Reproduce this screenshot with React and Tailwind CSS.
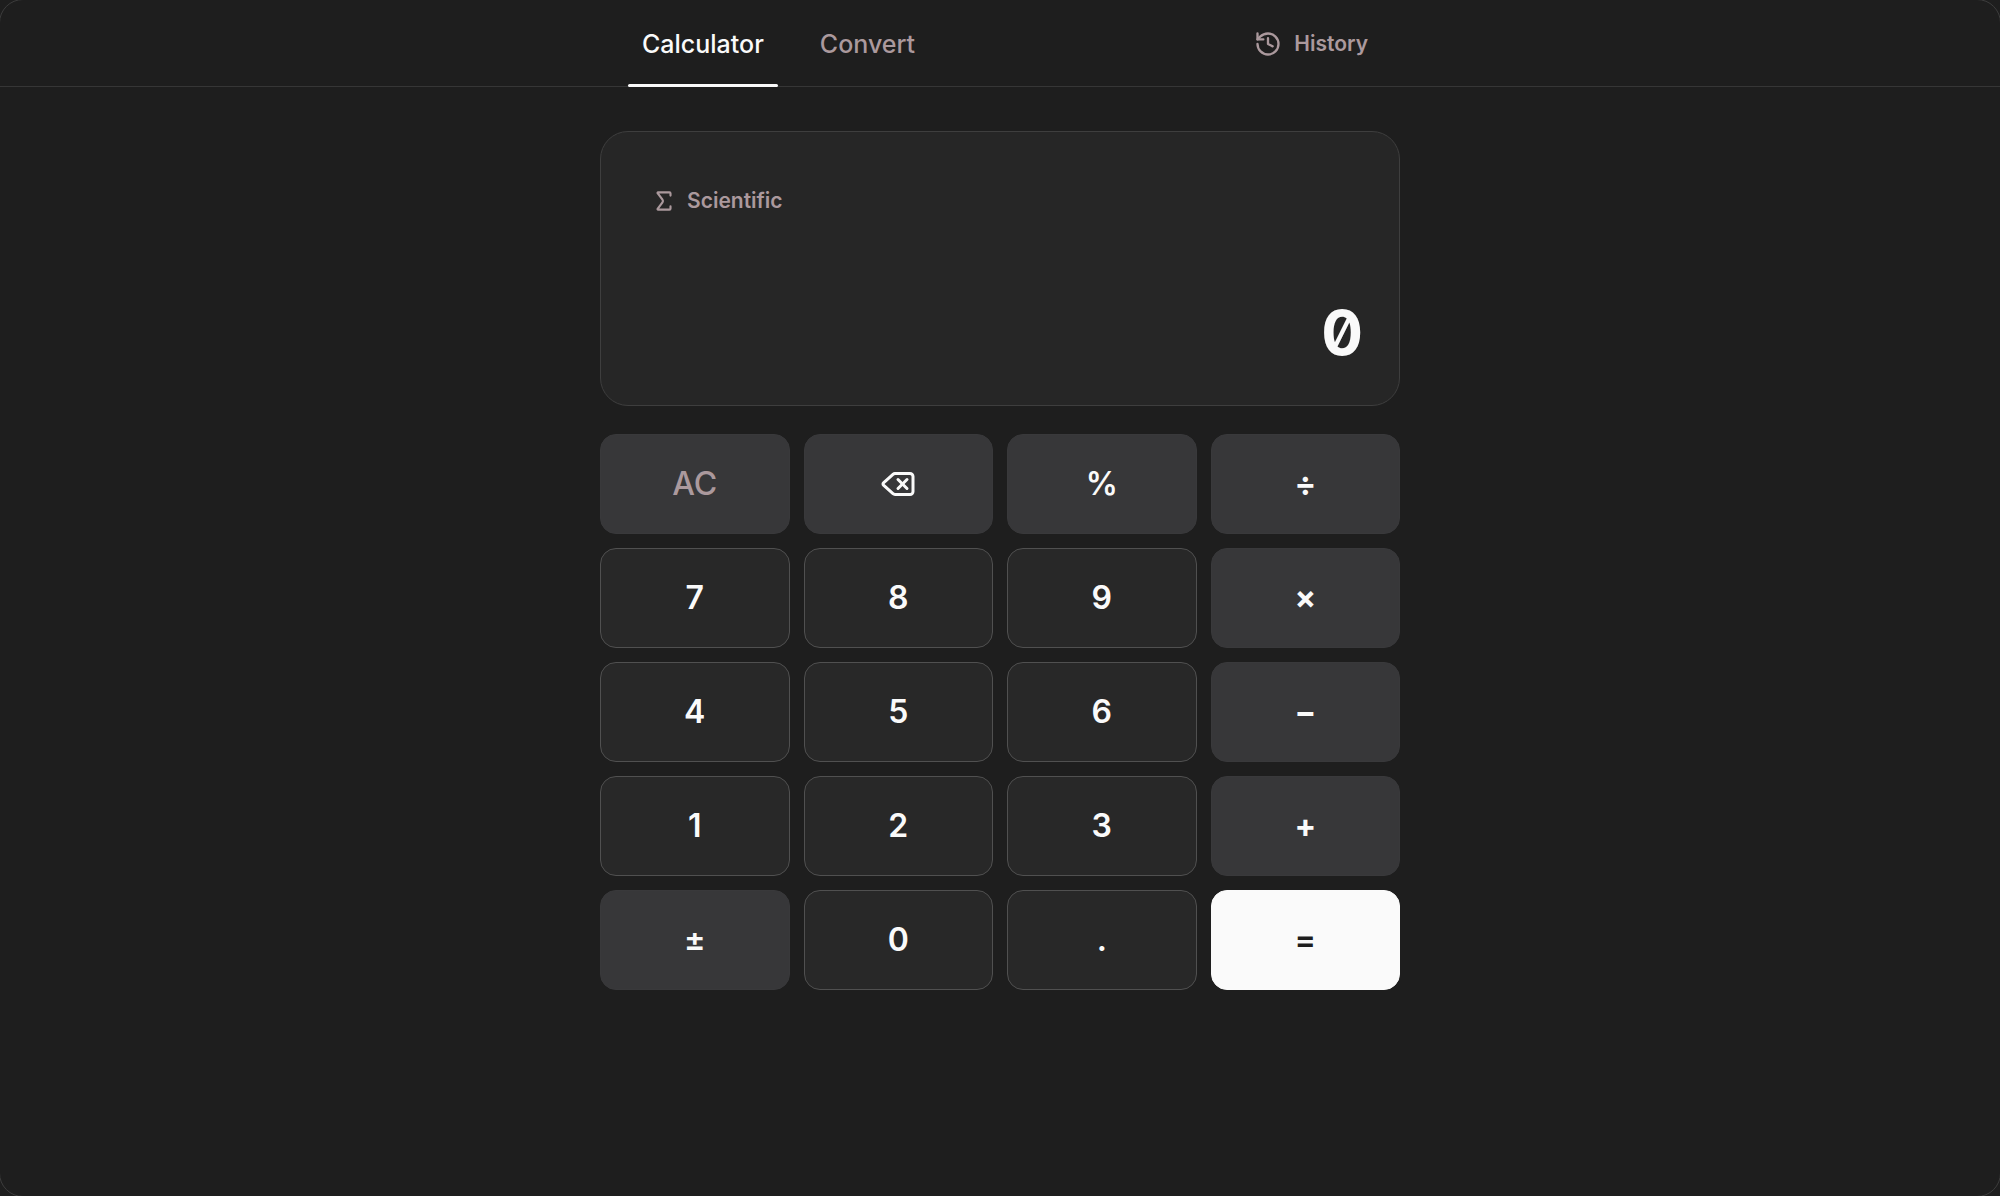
import React, { useState } from "react";
import { History, Sigma, Delete } from "lucide-react";

const KEYS = [
  { label: "AC", type: "clear" },
  { label: "Backspace", type: "function", icon: Delete },
  { label: "%", type: "function" },
  { label: "÷", type: "operator" },
  { label: "7", type: "digit" },
  { label: "8", type: "digit" },
  { label: "9", type: "digit" },
  { label: "×", type: "operator" },
  { label: "4", type: "digit" },
  { label: "5", type: "digit" },
  { label: "6", type: "digit" },
  { label: "−", type: "operator" },
  { label: "1", type: "digit" },
  { label: "2", type: "digit" },
  { label: "3", type: "digit" },
  { label: "+", type: "operator" },
  { label: "±", type: "function" },
  { label: "0", type: "digit" },
  { label: ".", type: "digit" },
  { label: "=", type: "equals" },
];

const KEY_STYLES = {
  clear: "border-[#39393b] bg-[#373739] font-medium text-[#ab999d]",
  function: "border-[#39393b] bg-[#373739] font-semibold text-[#fafafa]",
  operator: "border-[#39393b] bg-[#373739] font-bold text-[#fafafa]",
  digit: "border-[#505050] bg-[#282828] font-semibold text-[#fafafa]",
  equals: "border-[#fafafa] bg-[#fafafa] font-semibold text-[#1e1e1e]",
};

const Tab = ({ label, active, onClick }) => (
  <button
    type="button"
    onClick={onClick}
    className={`relative h-full px-3.5 text-[25px] leading-8 font-medium ${
      active ? "text-[#fafafa]" : "text-[#ab999d]"
    }`}
  >
    {label}
    {active && <span className="absolute inset-x-0 bottom-0 h-[3px] rounded-full bg-[#fafafa]" />}
  </button>
);

const Header = ({ tab, setTab }) => (
  <header className="border-b border-[#363636]">
    <div className="mx-auto -mb-px flex h-[87px] max-w-[800px] items-center justify-between px-7">
      <nav className="flex h-full gap-7">
        <Tab label="Calculator" active={tab === "calculator"} onClick={() => setTab("calculator")} />
        <Tab label="Convert" active={tab === "convert"} onClick={() => setTab("convert")} />
      </nav>
      <button type="button" className="flex items-center gap-3 px-1 text-[21px] leading-7 font-semibold text-[#ab999d]">
        <History className="size-7" strokeWidth={2} />
        History
      </button>
    </div>
  </header>
);

const Display = ({ value }) => (
  <section className="flex flex-col justify-between rounded-[28px] border border-[#3e3e3e] bg-[#262626] px-9 pt-[47px] pb-9">
    <button
      type="button"
      className="flex items-center gap-2.5 self-start px-3.5 py-2 text-[21px] leading-7 font-semibold text-[#ab999d]"
    >
      <Sigma className="size-[26px]" strokeWidth={2} />
      Scientific
    </button>
    <output className="mt-[74px] self-end text-[62px] leading-[72px] font-bold slashed-zero text-[#fafafa]">
      {value}
    </output>
  </section>
);

const Key = ({ label, type, icon: Icon, onPress }) => (
  <button
    type="button"
    aria-label={label}
    onClick={() => onPress(label)}
    className={`flex h-[100px] items-center justify-center rounded-2xl border text-[32px] leading-10 ${KEY_STYLES[type]}`}
  >
    {Icon ? <Icon className="size-9" strokeWidth={2} /> : label}
  </button>
);

const App = () => {
  const [tab, setTab] = useState("calculator");
  const [value, setValue] = useState("0");

  const handlePress = (label) => {
    if (label === "AC") {
      setValue("0");
    } else if (label === "Backspace") {
      setValue(value.slice(0, -1) || "0");
    } else if (/\d/.test(label)) {
      setValue(value === "0" ? label : value + label);
    } else if (label === "." && !value.includes(".")) {
      setValue(value + ".");
    }
  };

  return (
    <div className="flex min-h-screen overflow-hidden bg-[#1e1e1e] font-['Inter',sans-serif]">
      <div className="-m-px flex-1 rounded-3xl border border-[#3c3c3c]">
        <Header tab={tab} setTab={setTab} />
        <main className="mx-auto flex max-w-[800px] flex-col gap-7 pt-11">
          <Display value={value} />
          <div className="grid grid-cols-4 gap-3.5">
            {KEYS.map((key) => (
              <Key key={key.label} {...key} onPress={handlePress} />
            ))}
          </div>
        </main>
      </div>
    </div>
  );
};

export default App;
